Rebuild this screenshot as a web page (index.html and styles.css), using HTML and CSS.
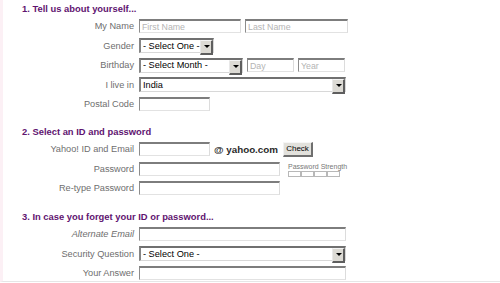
FILE: index.html
```html
<!DOCTYPE html>
<html lang="en">
<head>
<meta charset="utf-8">
<title>Sign up</title>
<link rel="stylesheet" href="styles.css">
</head>
<body>
<div class="page">
  <section class="sec sec-first">
    <h2 class="sec-title">1. Tell us about yourself...</h2>
    <div class="row">
      <label class="lbl">My Name</label>
      <div class="fields">
        <input class="in w-name" type="text" placeholder="First Name">
        <input class="in w-name2" type="text" placeholder="Last Name">
      </div>
    </div>
    <div class="row">
      <label class="lbl">Gender</label>
      <div class="fields">
        <span class="sel w-gender"><select><option>- Select One -</option></select></span>
      </div>
    </div>
    <div class="row">
      <label class="lbl">Birthday</label>
      <div class="fields">
        <span class="sel w-month"><select><option>- Select Month -</option></select></span>
        <input class="in w-day" type="text" placeholder="Day">
        <input class="in w-year" type="text" placeholder="Year">
      </div>
    </div>
    <div class="row">
      <label class="lbl">I live in</label>
      <div class="fields">
        <span class="sel w-full"><select><option>India</option></select></span>
      </div>
    </div>
    <div class="row">
      <label class="lbl">Postal Code</label>
      <div class="fields">
        <input class="in w-short" type="text">
      </div>
    </div>
  </section>

  <section class="sec">
    <h2 class="sec-title">2. Select an ID and password</h2>
    <div class="row">
      <label class="lbl">Yahoo! ID and Email</label>
      <div class="fields">
        <input class="in w-short" type="text">
        <span class="domain">@ yahoo.com</span>
        <button class="btn" type="button">Check</button>
      </div>
    </div>
    <div class="row">
      <label class="lbl">Password</label>
      <div class="fields">
        <input class="in w-pass" type="password">
        <div class="strength">
          <span class="strength-label">Password Strength</span>
          <div class="strength-bar"><i></i><i></i><i></i><i></i></div>
        </div>
      </div>
    </div>
    <div class="row">
      <label class="lbl">Re-type Password</label>
      <div class="fields">
        <input class="in w-pass" type="password">
      </div>
    </div>
  </section>

  <section class="sec sec-last">
    <h2 class="sec-title">3. In case you forget your ID or password...</h2>
    <div class="row">
      <label class="lbl lbl-italic">Alternate Email</label>
      <div class="fields">
        <input class="in w-full" type="text">
      </div>
    </div>
    <div class="row">
      <label class="lbl">Security Question</label>
      <div class="fields">
        <span class="sel w-full"><select><option>- Select One -</option></select></span>
      </div>
    </div>
    <div class="row">
      <label class="lbl">Your Answer</label>
      <div class="fields">
        <input class="in w-full" type="text">
      </div>
    </div>
  </section>
</div>
</body>
</html>
```

FILE: styles.css
```css
* { box-sizing: border-box; }

html, body {
  margin: 0;
  padding: 0;
  background: #ffffff;
}

body {
  font-family: "Liberation Sans", Arial, sans-serif;
  width: 500px;
  height: 283px;
  overflow: hidden;
}

.page {
  border-left: 3px solid #fcf0f5;
  border-bottom: 1px solid #e6e6e6;
  height: 282px;
  padding-top: 3px;
}

.sec {
  display: flex;
  flex-direction: column;
  gap: 5.5px;
  margin-top: 15px;
}

.sec-first { margin-top: 0; }
.sec-last { margin-top: 16px; }

.sec-title {
  margin: 0 0 -1.5px 19px;
  font-size: 9.4px;
  line-height: 12px;
  font-weight: bold;
  color: #5f1470;
}

.row {
  display: grid;
  grid-template-columns: 131px 1fr;
  column-gap: 5px;
  align-items: center;
  height: 14px;
}

.lbl {
  text-align: right;
  font-size: 9.2px;
  color: #6e6e6e;
  white-space: nowrap;
}

.lbl-italic { font-style: italic; }

.fields {
  display: flex;
  align-items: center;
  gap: 4px;
  height: 14px;
}

.in {
  height: 14px;
  margin: 0;
  padding: 0 2px;
  font-family: "Liberation Sans", Arial, sans-serif;
  font-size: 8.8px;
  color: #000;
  background: #fff;
  border-style: solid;
  border-width: 2px 1px 1px 1px;
  border-color: #7d7d7d #dcdcdc #e2e2e2 #8c8c8c;
  outline: none;
}

.in::placeholder { color: #b4b4b4; }

.w-name { width: 102px; }
.w-name2 { width: 103px; }
.w-day { width: 47px; }
.w-year { width: 47px; }
.w-short { width: 71px; }
.w-pass { width: 141px; }
.w-full { width: 207px; }
.w-gender { width: 75px; }
.w-month { width: 104px; }

.sel {
  position: relative;
  display: block;
  height: 15px;
}

.sel select {
  -webkit-appearance: none;
  appearance: none;
  display: block;
  width: 100%;
  height: 15px;
  margin: 0;
  padding: 0 11px 0 2px;
  font-family: "Liberation Sans", Arial, sans-serif;
  font-size: 9.2px;
  line-height: 11px;
  color: #000;
  background: #fff;
  border-style: solid;
  border-width: 2px 1px 1px 2px;
  border-color: #707070 #d8d8d8 #d8d8d8 #858585;
  border-radius: 0;
  outline: none;
}

.sel::after {
  content: "";
  position: absolute;
  right: 1px;
  top: 2px;
  width: 10px;
  height: 12px;
  background: #dcdad4;
  border-style: solid;
  border-width: 1px 2px 2px 1px;
  border-color: #f4f4f4 #5e5e5e #5e5e5e #e8e8e8;
}

.sel::before {
  content: "";
  position: absolute;
  right: 4px;
  top: 7px;
  width: 0;
  height: 0;
  border-left: 3px solid transparent;
  border-right: 3px solid transparent;
  border-top: 3px solid #000;
  z-index: 1;
}

.domain {
  font-size: 9.8px;
  font-weight: bold;
  color: #2a2a2a;
  white-space: nowrap;
}

.btn {
  margin: 0 0 0 1px;
  width: 30px;
  height: 15px;
  padding: 0;
  font-family: "Liberation Sans", Arial, sans-serif;
  font-size: 8px;
  color: #000;
  background: #e2e1dc;
  border-style: solid;
  border-width: 1px 2px 2px 1px;
  border-color: #f6f6f6 #6f6f6f #6f6f6f #f2f2f2;
}

.strength {
  align-self: flex-start;
  display: flex;
  flex-direction: column;
  gap: 1px;
  margin-left: 4px;
  margin-top: 1px;
}

.strength-label {
  font-size: 7px;
  line-height: 7px;
  color: #777;
  white-space: nowrap;
}

.strength-bar {
  display: flex;
  gap: 0;
}

.strength-bar i {
  display: block;
  width: 12.5px;
  height: 6px;
  border: 1px solid #b8b8b8;
  margin-right: 0.5px;
}
```
